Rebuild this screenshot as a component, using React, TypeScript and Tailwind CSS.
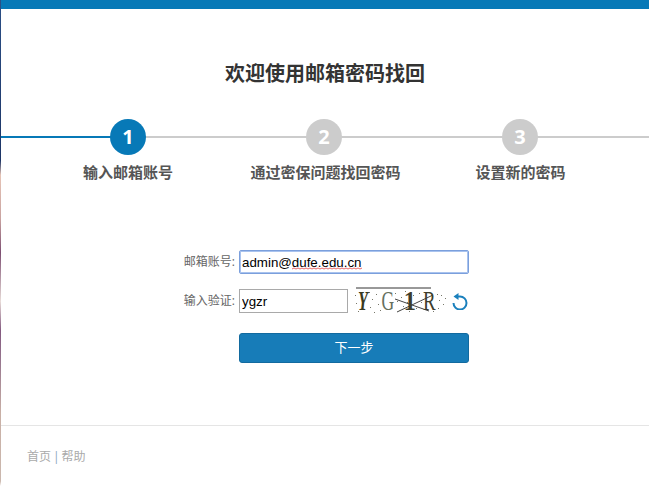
const steps = [
  { num: 1, label: '输入邮箱账号', active: true, labelClass: '' },
  { num: 2, label: '通过密保问题找回密码', active: false, labelClass: 'ml-[3px]' },
  { num: 3, label: '设置新的密码', active: false, labelClass: 'ml-[1px]' },
];

const font = "font-['Open_Sans','Noto_Sans_CJK_SC',sans-serif]";

const dots = [
  [2, 9], [3, 17], [5, 25], [16, 6], [17, 21], [19, 13], [21, 26], [23, 8], [25, 18], [27, 24],
  [42, 7], [44, 15], [46, 24], [48, 11], [50, 20], [52, 5], [54, 16], [56, 25], [60, 9], [63, 22],
  [66, 7], [68, 16], [84, 8], [86, 14], [88, 9], [90, 18], [92, 12], [85, 22], [80, 25], [57, 12],
];

const Captcha = () => (
  <div className="relative w-[94px] h-[30px] overflow-hidden font-['Liberation_Serif',serif] text-[#3d3d2c]">
    <svg className="absolute inset-0" width="94" height="30" viewBox="0 0 94 30">
      <path d="M3 2H40L78 2" stroke="#333" strokeWidth="1" fill="none" />
      <path d="M42 13L76 25M44 26L80 9" stroke="#444" strokeWidth="1" fill="none" />
      {dots.map(([x, y], i) => (
        <rect key={i} x={x} y={y} width="1" height="1" fill="#77776a" />
      ))}
    </svg>
    <div className="relative h-full flex items-center text-[27px] leading-none">
      <span className="w-[20px] ml-[1px] inline-block scale-x-[0.6] italic font-bold text-[#3a3a20]">Y</span>
      <span className="w-[20px] ml-[4px] inline-block scale-x-[0.65] text-[#66705f]">G</span>
      <span className="w-[14px] ml-[5px] inline-block scale-x-[0.9] font-bold">1</span>
      <span className="w-[20px] ml-[3px] inline-block scale-x-[0.7]">R</span>
    </div>
  </div>
);

const RefreshIcon = () => (
  <svg width="16" height="17" viewBox="0 0 16 17" className="ml-[5px]">
    <path d="M1.5 10A6.5 6.5 0 1 0 8 3.5H6" stroke="#1a80bd" strokeWidth="2" fill="none" />
    <polygon points="6.5,0 6.5,7 1.5,3.5" fill="#1a80bd" />
  </svg>
);

const App = () => (
  <div className={`w-[649px] h-[486px] flex bg-white overflow-hidden ${font}`}>
    <div className="w-px h-full shrink-0 bg-[linear-gradient(to_bottom,#2b4f86_0%,#1d3566_33%,#e6c4b6_36%,#c9a3a0_45%,#7d4f72_52%,#e8dcd8_62%,#83597f_68%,#9a7a90_75%,#c9b0a6_85%,#cbb8ae_99%,#ffffff_100%)]" />
    <div className="flex-1 flex flex-col min-w-0">
      <div className="h-[9px] bg-[#0779b7] shrink-0" />

      <h1 className="mt-[50px] h-[30px] text-center text-[20px] leading-[30px] font-bold text-[#333]">
        欢迎使用邮箱密码找回
      </h1>

      <div className="relative mt-[30px] h-[62px]">
        <div className="absolute left-0 right-0 top-[17px] h-[2px] flex">
          <div className="w-[120px] bg-[#0779b7]" />
          <div className="flex-1 bg-[#cccccc]" />
        </div>
        <div className="relative pl-[29px] grid grid-cols-[repeat(3,196px)]">
          {steps.map(s => (
            <div key={s.num} className="flex flex-col items-center">
              <div
                className={`w-9 h-9 rounded-full flex items-center justify-center text-white text-[20px] font-bold ${
                  s.active ? 'bg-[#0779b7]' : 'bg-[#cccccc]'
                }`}
              >
                {s.num}
              </div>
              <div className={`mt-[7px] text-[15px] leading-[20px] font-semibold text-[#555] whitespace-nowrap ${s.labelClass}`}>
                {s.label}
              </div>
            </div>
          ))}
        </div>
      </div>

      <div className="mt-[69px] pl-[170px] flex flex-col">
        <div className="flex items-center h-[24px]">
          <label className="w-[64px] text-right text-[12px] text-[#666] whitespace-nowrap">邮箱账号:</label>
          <div className="relative ml-[4px]">
            <input
              readOnly
              value="admin@dufe.edu.cn"
              className="block w-[230px] h-[24px] px-[2px] text-[13.33px] text-black font-['Liberation_Sans',sans-serif] border border-[#7b9fdc] rounded-[2px] outline-none shadow-[inset_0_0_0_1px_#a9c3ee]"
            />
            {/* spellcheck squiggle under the domain part */}
            <svg className="absolute left-[53px] top-[17px]" width="70" height="3" viewBox="0 0 70 3">
              <path
                d="M0 2L2 1L4 2L6 1L8 2L10 1L12 2L14 1L16 2L18 1L20 2L22 1L24 2L26 1L28 2L30 1L32 2L34 1L36 2L38 1L40 2L42 1L44 2L46 1L48 2L50 1L52 2L54 1L56 2L58 1L60 2L62 1L64 2L66 1L68 2L70 1"
                stroke="#e86a6a"
                strokeWidth="1"
                fill="none"
              />
            </svg>
          </div>
        </div>

        <div className="flex items-center mt-[12px]">
          <label className="w-[64px] text-right text-[12px] text-[#666] whitespace-nowrap">输入验证:</label>
          <input
            readOnly
            value="ygzr"
            className="ml-[4px] w-[109px] h-[24px] px-[2px] text-[13.33px] text-black font-['Liberation_Sans',sans-serif] border border-[#a9a9a9] outline-none"
          />
          <div className="ml-[5px]">
            <Captcha />
          </div>
          <RefreshIcon />
        </div>

        <button className="mt-[17px] ml-[68px] w-[230px] h-[30px] rounded-[3px] bg-[#177cb8] border border-[#126a9f] text-white text-[13px]">
          下一步
        </button>
      </div>

      <div className="mt-auto h-[61px] border-t border-[#e5e5e5] pl-[26px] pt-[22px] text-[12px] leading-[18px] text-[#aaa]">
        首页<span className="ml-[2px] mr-[2px] text-[#8aa8bb]">|</span>帮助
      </div>
    </div>
  </div>
);

export default App;
